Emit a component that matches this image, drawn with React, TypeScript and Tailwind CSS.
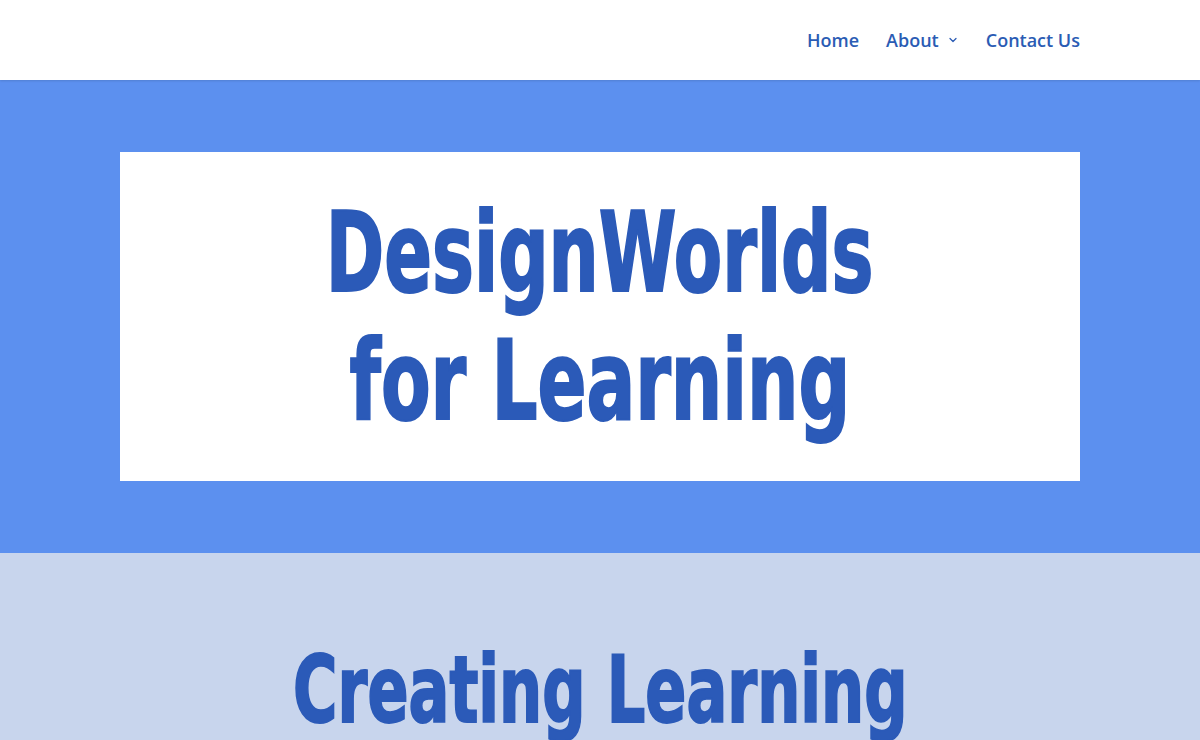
import React from 'react';
import { ChevronDown } from 'lucide-react';

// Oswald is not installed; a condensed bold face squeezed horizontally stands in for it
const HEAD_FONT = { fontFamily: '"DejaVu Sans Condensed", "Liberation Sans", sans-serif' };

export default function App() {
  return (
    <div className="min-h-screen bg-[#c8d5ed]" style={{ fontFamily: '"Open Sans", sans-serif' }}>
      <header className="relative z-10 h-20 bg-white shadow-[0_1px_2px_rgba(0,0,0,0.12)]">
        <div className="mx-auto flex h-full w-[960px] items-center justify-end">
          <nav className="flex items-center gap-[27px] text-[18px] font-semibold text-[#2b5cb4]">
            <a className="leading-none">Home</a>
            <a className="flex items-center gap-[8px] leading-none">
              About
              <ChevronDown size={12} strokeWidth={2.5} />
            </a>
            <a className="leading-none">Contact Us</a>
          </nav>
        </div>
      </header>

      <section className="bg-[#5c90ef] py-[72px]">
        <div className="mx-auto flex h-[329px] w-[960px] flex-col items-center justify-center bg-white text-[110px] font-bold leading-[128px] text-[#2b5ab8] [-webkit-text-stroke:2px_#2b5ab8]">
          <h1 className="flex flex-col items-center" style={HEAD_FONT}>
            <span className="inline-block scale-x-[0.712] whitespace-nowrap">DesignWorlds</span>
            <span className="inline-block scale-x-[0.73] whitespace-nowrap">for Learning</span>
          </h1>
        </div>
      </section>

      <section className="flex justify-center pt-[82px]">
        <h2
          className="inline-block scale-x-[0.724] whitespace-nowrap text-center text-[93px] font-bold leading-[110px] text-[#2b5ab8] [-webkit-text-stroke:2px_#2b5ab8]"
          style={HEAD_FONT}
        >
          Creating Learning
        </h2>
      </section>
    </div>
  );
}
